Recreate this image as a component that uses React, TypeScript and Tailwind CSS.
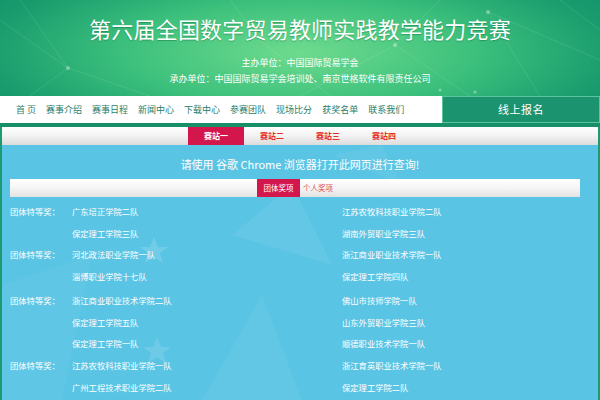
import React from 'react';

const navItems = ['首 页', '赛事介绍', '赛事日程', '新闻中心', '下载中心', '参赛团队', '现场比分', '获奖名单', '联系我们'];
const stations = ['赛站一', '赛站二', '赛站三', '赛站四'];

interface AwardRow {
  label?: string;
  left: string;
  right: string;
  h: string;
}

const rows: AwardRow[] = [
  { label: '团体特等奖：', left: '广东培正学院二队', right: '江苏农牧科技职业学院二队', h: 'h-[23px]' },
  { left: '保定理工学院三队', right: '湖南外贸职业学院三队', h: 'h-[21px]' },
  { label: '团体特等奖：', left: '河北政法职业学院一队', right: '浙江商业职业技术学院一队', h: 'h-[20px]' },
  { left: '淄博职业学院十七队', right: '保定理工学院四队', h: 'h-[25px]' },
  { label: '团体特等奖：', left: '浙江商业职业技术学院二队', right: '佛山市技师学院一队', h: 'h-[22px]' },
  { left: '保定理工学院五队', right: '山东外贸职业学院三队', h: 'h-[22px]' },
  { left: '保定理工学院一队', right: '顺德职业技术学院一队', h: 'h-[21px]' },
  { label: '团体特等奖：', left: '江苏农牧科技职业学院一队', right: '浙江育英职业技术学院一队', h: 'h-[22px]' },
  { left: '广州工程技术职业学院二队', right: '保定理工学院二队', h: 'h-[22px]' },
];

const HeaderNet = () => (
  <svg className="absolute inset-0 w-full h-full" viewBox="0 0 600 96" preserveAspectRatio="none">
    <g stroke="#ffffff" strokeOpacity="0.18" strokeWidth="0.6" fill="none">
      <path d="M0 20 L68 68 L150 96" />
      <path d="M68 68 L30 96" />
      <path d="M20 0 L68 68" />
      <path d="M230 0 L260 40 L330 96" />
      <path d="M395 45 L470 96" />
      <path d="M395 45 L440 0" />
      <path d="M395 45 L300 96" />
      <path d="M488 12 L540 96" />
      <path d="M488 12 L600 60" />
      <path d="M560 0 L600 30" />
    </g>
    <g fill="#ffffff" fillOpacity="0.35">
      <circle cx="68" cy="68" r="2" />
      <circle cx="395" cy="45" r="2" />
      <circle cx="488" cy="12" r="2" />
      <circle cx="440" cy="90" r="1.6" />
      <circle cx="475" cy="92" r="1.6" />
    </g>
  </svg>
);

const BlueDeco = () => (
  <svg className="absolute inset-0 w-full h-full pointer-events-none" viewBox="0 0 596 255" preserveAspectRatio="none">
    <polygon points="230,90 290,40 330,120" fill="#ffffff" fillOpacity="0.06" />
    <polygon points="152,92 156,102 166,102 158,108 161,118 152,112 143,118 146,108 138,102 148,102" fill="#ffffff" fillOpacity="0.14" />
    <polygon points="155,192 159,202 169,202 161,208 164,218 155,212 146,218 149,208 141,202 151,202" fill="#ffffff" fillOpacity="0.12" />
    <polygon points="0,140 90,110 60,255 0,255" fill="#ffffff" fillOpacity="0.04" />
    <polygon points="200,255 260,150 300,255" fill="#ffffff" fillOpacity="0.05" />
    <polygon points="330,10 380,0 400,40" fill="#ffffff" fillOpacity="0.05" />
  </svg>
);

export default function App() {
  return (
    <div className="w-[600px] h-[400px] overflow-hidden bg-[#5ac4e4] font-['Noto_Sans_CJK_SC','Noto_Sans',sans-serif]">
      {/* Header */}
      <div className="relative h-[96px] bg-[radial-gradient(ellipse_65%_120%_at_50%_55%,#6edb8e_0%,#3cc07c_45%,#1a9c6e_80%,#128f6a_100%)] flex flex-col items-center">
        <HeaderNet />
        <h1 className="relative mt-[15px] text-[22px] leading-[26px] text-white tracking-[0.2px] [text-shadow:0_1px_1px_rgba(0,80,40,0.35)]">
          第六届全国数字贸易教师实践教学能力竞赛
        </h1>
        <p className="relative mt-[14px] text-[9px] leading-[16px] text-white">主办单位：中国国际贸易学会</p>
        <p className="relative text-[9px] leading-[16px] text-white">承办单位：中国国际贸易学会培训处、南京世格软件有限责任公司</p>
      </div>

      {/* Nav */}
      <div className="flex h-[27px]">
        <div className="flex-1 bg-white flex items-center pl-[16px] gap-[10px]">
          {navItems.map(item => (
            <span key={item} className="text-[9px] text-[#2a7d68] whitespace-pre">
              {item}
            </span>
          ))}
        </div>
        <div className="w-[158px] bg-[#1c936f] border border-[#5cc59e] flex items-center justify-center text-[11px] text-white tracking-[0.5px]">
          线上报名
        </div>
      </div>
      <div className="h-[4px] bg-[#17906a]" />

      {/* Body */}
      <div className="border-x-2 border-[#1c9a72] h-[273px] flex flex-col">
        <div className="h-[18px] bg-gradient-to-b from-white via-[#f2f2f2] to-[#dcdcdc] flex pl-[186px]">
          {stations.map((s, i) => (
            <div
              key={s}
              className={`w-[56px] flex items-center justify-center text-[8px] font-bold ${i === 0 ? 'bg-[#d3174c] text-white' : 'text-[#e2302b]'}`}
            >
              {s}
            </div>
          ))}
        </div>

        <div className="relative flex-1">
          <BlueDeco />
          <div className="relative text-center pt-[12px] text-[11px] leading-[14px] text-white">
            请使用 谷歌 Chrome 浏览器打开此网页进行查询!
          </div>
          <div className="relative mt-[8px] ml-[8px] w-[570px] h-[18px] bg-gradient-to-b from-white via-[#f5f5f5] to-[#e2e2e2] flex pl-[247px]">
            <div className="w-[43px] bg-[#d3174c] text-white text-[7.5px] flex items-center justify-center">团体奖项</div>
            <div className="pl-[3px] text-[#e0504a] text-[7.5px] flex items-center">个人奖项</div>
          </div>

          <div className="relative mt-[3px] text-[8.3px] text-white">
            {rows.map((r, i) => (
              <div key={i} className={`flex items-center ${r.h}`}>
                <span className="w-[70px] pl-[8px]">{r.label ?? ''}</span>
                <span className="w-[270px]">{r.left}</span>
                <span>{r.right}</span>
              </div>
            ))}
          </div>
        </div>
      </div>
    </div>
  );
}
